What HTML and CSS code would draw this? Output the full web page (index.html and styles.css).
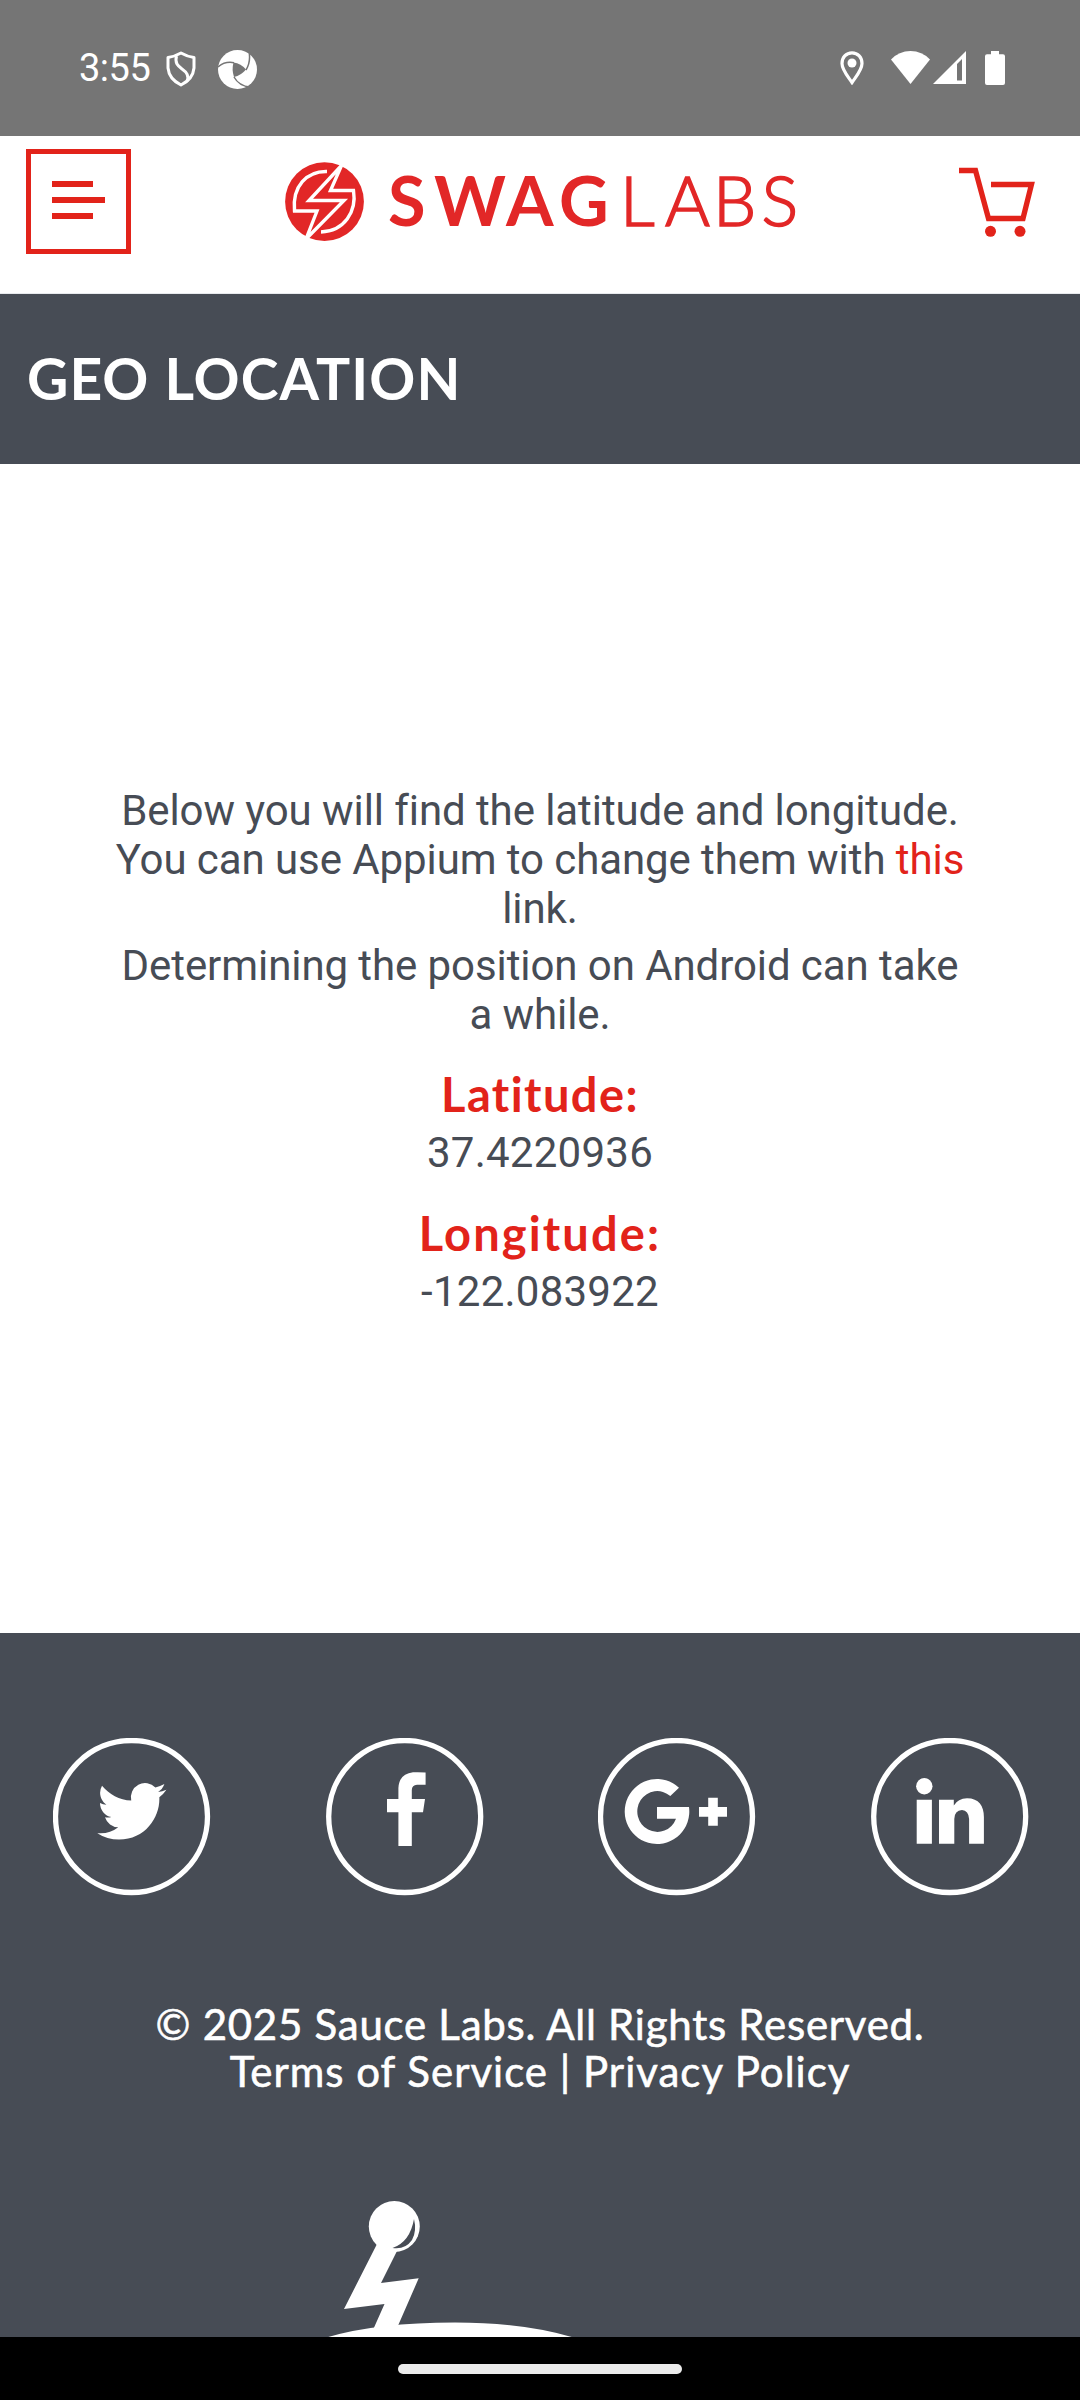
FILE: index.html
```html
<!DOCTYPE html>
<html lang="en">
<head>
<meta charset="utf-8">
<title>Swag Labs - Geo Location</title>
<link rel="stylesheet" href="styles.css">
</head>
<body>
<div class="screen">
  <div class="status">
    <span class="clock">3:55</span>
    <svg class="st-shield" width="30" height="36" viewBox="0 0 30 36" fill="none" stroke="#fff" stroke-width="3" stroke-linejoin="round"><path d="M15 2 Q21 5.500 28 6.500 V17 Q27 28 15 34 Q3 28 2 17 V6.500 Q9 5.500 15 2Z"/><path d="M10.500 5 C8.500 12 12 15 16 18 C22 22 23 26 21 30"/></svg>
    <svg class="st-appium" width="39" height="40" viewBox="0 0 39 40"><circle cx="19.500" cy="19.500" r="19.500" fill="#fff"/><path d="M15.500 12.500 Q23 13.500 28 19.500 Q23 25.500 16 27 Q13.500 20 15.500 12.500Z" fill="#757575"/><path d="M0 17 Q7 11 16 12.700 M28 20 Q33 12 31 1 M16 27 Q21 36 32 37" fill="none" stroke="#757575" stroke-width="1.500"/></svg>
    <span class="spacer"></span>
    <svg class="st-pin" width="24" height="34" viewBox="0 0 24 34"><path d="M12 1.800 C6 1.800 2 6.500 2 12.500 C2 19 8 25.500 12 31.500 C16 25.500 22 19 22 12.500 C22 6.500 18 1.800 12 1.800Z" fill="none" stroke="#fff" stroke-width="3.200"/><circle cx="12" cy="12" r="4.500" fill="#fff"/></svg>
    <svg class="st-wifi" width="39" height="33" viewBox="0 0 39 33"><path d="M0 8.500 Q8 0 19.500 0 Q31 0 39 8.500 L19.500 33Z" fill="#fff"/></svg>
    <svg class="st-signal" width="33" height="33" viewBox="0 0 33 33"><path fill-rule="evenodd" d="M0 33 L33 0 V33Z M24 13 V29.500 H29 V8Z" fill="#fff"/></svg>
    <svg class="st-battery" width="20" height="34" viewBox="0 0 20 34"><path d="M6 0 H14 V3.300 H18 Q20 3.300 20 5.300 V32 Q20 34 18 34 H2 Q0 34 0 32 V5.300 Q0 3.300 2 3.300 H6Z" fill="#fff"/></svg>
  </div>
  <header class="header">
    <div class="menu"><i></i><i class="long"></i><i></i></div>
    <svg class="logo" width="530" height="80" viewBox="0 0 530 80">
      <circle cx="39.500" cy="39.700" r="39.400" fill="#e22727"/>
      <path d="M42 9.500 C22 9 7 24 9.500 49 H32 L21 77 L59 38.500 H24 L56.500 3.500 L45.500 28.500 H68.500 C72 50 59 69 36 70" fill="none" stroke="#fff" stroke-width="3.400"/>
      <g class="wordmark"><text class="bold" y="64" x="103 149 221 274">SWAG</text><text class="light" y="64" x="335 380 428 476.500">LABS</text></g>
    </svg>
    <svg class="cart" width="77" height="72" viewBox="0 0 77 72" fill="none" stroke="#e2231a" stroke-width="5.300"><path d="M0 3.500 H16.500 L29.500 51.500 H64 L72.500 17.500 H32"/><g fill="#e2231a" stroke="none"><circle cx="31.500" cy="64.300" r="5.500"/><circle cx="61" cy="64.300" r="5.500"/></g></svg>
  </header>
  <h1 class="title"><span>GEO LOCATION</span></h1>
  <main class="content">
    <p>Below you will find the latitude and longitude. You can use Appium to change them with <a>this</a> link.</p>
    <p class="second">Determining the position on Android can take a while.</p>
    <h2 class="lat">Latitude:</h2>
    <p class="value">37.4220936</p>
    <h2 class="lon">Longitude:</h2>
    <p class="value">-122.083922</p>
  </main>
  <footer class="footer">
    <div class="social">
      <svg width="158" height="158" viewBox="0 0 158 158"><circle class="ring" cx="78.500" cy="78.500" r="76"/><path transform="translate(44.300 38.500) scale(2.880 2.900)" d="M23.953 4.570a10 10 0 01-2.825.775 4.958 4.958 0 002.163-2.723c-.951.555-2.005.959-3.127 1.184a4.920 4.920 0 00-8.384 4.482C7.690 8.095 4.067 6.130 1.640 3.162a4.822 4.822 0 00-.666 2.475c0 1.710.870 3.213 2.188 4.096a4.904 4.904 0 01-2.228-.616v.060a4.923 4.923 0 003.946 4.827 4.996 4.996 0 01-2.212.085 4.936 4.936 0 004.604 3.417 9.867 9.867 0 01-6.102 2.105c-.390 0-.779-.023-1.170-.067a13.995 13.995 0 007.557 2.209c9.053 0 13.998-7.496 13.998-13.985 0-.210 0-.420-.015-.630A9.935 9.935 0 0024 4.590z"/></svg>
      <svg width="158" height="158" viewBox="0 0 158 158"><circle class="ring" cx="78.700" cy="78.500" r="76"/><path d="M72.400 108 V74.300 H61 V61 H72.400 V50 Q73 36 87 34.300 Q93 34 99.600 34.500 V46.700 H91 Q86 47 85.800 52 V61 H99 L97 74.300 H85.800 V108Z"/></svg>
      <svg width="158" height="158" viewBox="0 0 158 158"><circle class="ring" cx="78.500" cy="78.500" r="76"/><path d="M81 49.700 A32.300 32.500 0 1 0 91 69 H59 V80.700 H78 A20 20.400 0 1 1 72.300 58Z"/><path d="M101 69 H110.200 V59.700 H119.800 V69 H129 V78.700 H119.800 V87.700 H110.200 V78.700 H101Z"/></svg>
      <svg width="158" height="158" viewBox="0 0 158 158"><circle class="ring" cx="78.700" cy="78.500" r="76"/><circle cx="53.300" cy="48.300" r="8.200"/><path d="M45.700 61.700 H60.900 V105.700 H45.700Z M68 61.800 H82.800 V67.500 Q87 60.500 96 60.300 C108 60.300 112.900 68 112.900 79 V105.700 H98.100 V81 Q97.500 72.300 91 72 Q83.500 72.300 83.300 81 V105.700 H68Z"/></svg>
    </div>
    <div class="legal"><span class="copy">© 2025 Sauce Labs. All Rights Reserved.</span><span class="terms">Terms of Service | Privacy Policy</span></div>
    <svg class="bot" width="260" height="140" viewBox="320 2197 260 140" fill="#fff"><circle cx="394.300" cy="2226.500" r="25.500"/><path d="M377 2244 L344 2309 L384.500 2304 L372.500 2331 L397 2328 L418.700 2278.300 L381 2283 L397.500 2250Z"/><path d="M325 2338 Q375 2322.500 455 2322.500 Q525 2322.500 575 2338Z"/><path d="M414 2219 Q410 2242 392.500 2248 Q405 2250 412 2240 Q417 2231 414 2219Z" fill="#474c55"/></svg>
  </footer>
  <div class="navbar"><i></i></div>
</div>
</body>
</html>
```
FILE: styles.css
```css
* { box-sizing: border-box; }
body { margin: 0; background: #fff; }
.screen { width: 1080px; height: 2400px; display: flex; flex-direction: column; overflow: hidden; background: #fff; }
.status { height: 136px; background: #757575; display: flex; align-items: flex-start; padding: 50px 75px 0 79px; }
.clock { width: 87px; font: 400 38px/44px Roboto, sans-serif; color: #fff; margin-top: -4px; letter-spacing: -0.5px; white-space: nowrap; }
.st-shield { margin-top: 1px; }
.st-appium { margin-left: 22px; }
.spacer { flex: 1; }
.st-pin { margin: 1px 27px 0 0; }
.st-wifi { margin: 1px 3px 0 0; }
.st-signal { margin: 1px 19px 0 0; }
.st-battery { margin-top: 1px; }
.header { height: 158px; display: flex; align-items: flex-start; padding: 13px 0 0 26px; border-bottom: 1px solid #e8eaed; }
.menu { width: 105px; height: 105px; border: 5px solid #e2231a; padding: 27px 0 0 21px; display: flex; flex-direction: column; gap: 10px; }
.menu i { width: 41px; height: 6px; background: #e2231a; }
.menu .long { width: 53px; }
.logo { margin: 13px 0 0 154px; overflow: visible; }
.wordmark { font: 400 68.5px Lato, sans-serif; fill: #e22727; }
.bold { font-weight: 700; }
.light { font-weight: 300; stroke: #e22727; stroke-width: 1.6px; }
.cart { margin: 18px 0 0 144px; }
.title { margin: 0; height: 170px; padding: 0 27px; background: #474c55; color: #fff; font: 700 57px/168px Lato, sans-serif; letter-spacing: 1.05px; white-space: nowrap; }
.content { height: 1169px; padding: 322px 110px 0; text-align: center; color: #474c55; font: 400 42px/49px Roboto, sans-serif; letter-spacing: -0.08px; }
.content p { margin: 0; }
.content .second { margin-top: 8px; }
.content .value { letter-spacing: 0.25px; }
.content a { color: #e2231a; }
.content h2 { margin: 0 0 5px; color: #e2231a; font: 700 47px/57px Lato, sans-serif; font-variant-ligatures: none; }
.content .lat { margin-top: 27px; letter-spacing: 1.4px; }
.content .lon { margin-top: 28px; letter-spacing: 2.1px; }
.footer { height: 704px; background: #474c55; color: #fff; overflow: hidden; }
.social { display: flex; justify-content: space-between; padding: 105px 51px 0 53px; fill: #fff; }
.ring { fill: none; stroke: #fff; stroke-width: 5.3px; }
.legal { display: flex; flex-direction: column; align-items: center; margin-top: 105px; font: 400 42px/47px Lato, sans-serif; -webkit-text-stroke: 0.6px #fff; white-space: nowrap; }
.copy { letter-spacing: 0.74px; }
.terms { letter-spacing: 1px; }
.bot { display: block; margin: 102px 0 0 320px; }
.navbar { height: 63px; background: #000; display: flex; justify-content: center; padding-top: 27px; }
.navbar i { width: 284px; height: 10px; border-radius: 5px; background: #ebebeb; }
```
